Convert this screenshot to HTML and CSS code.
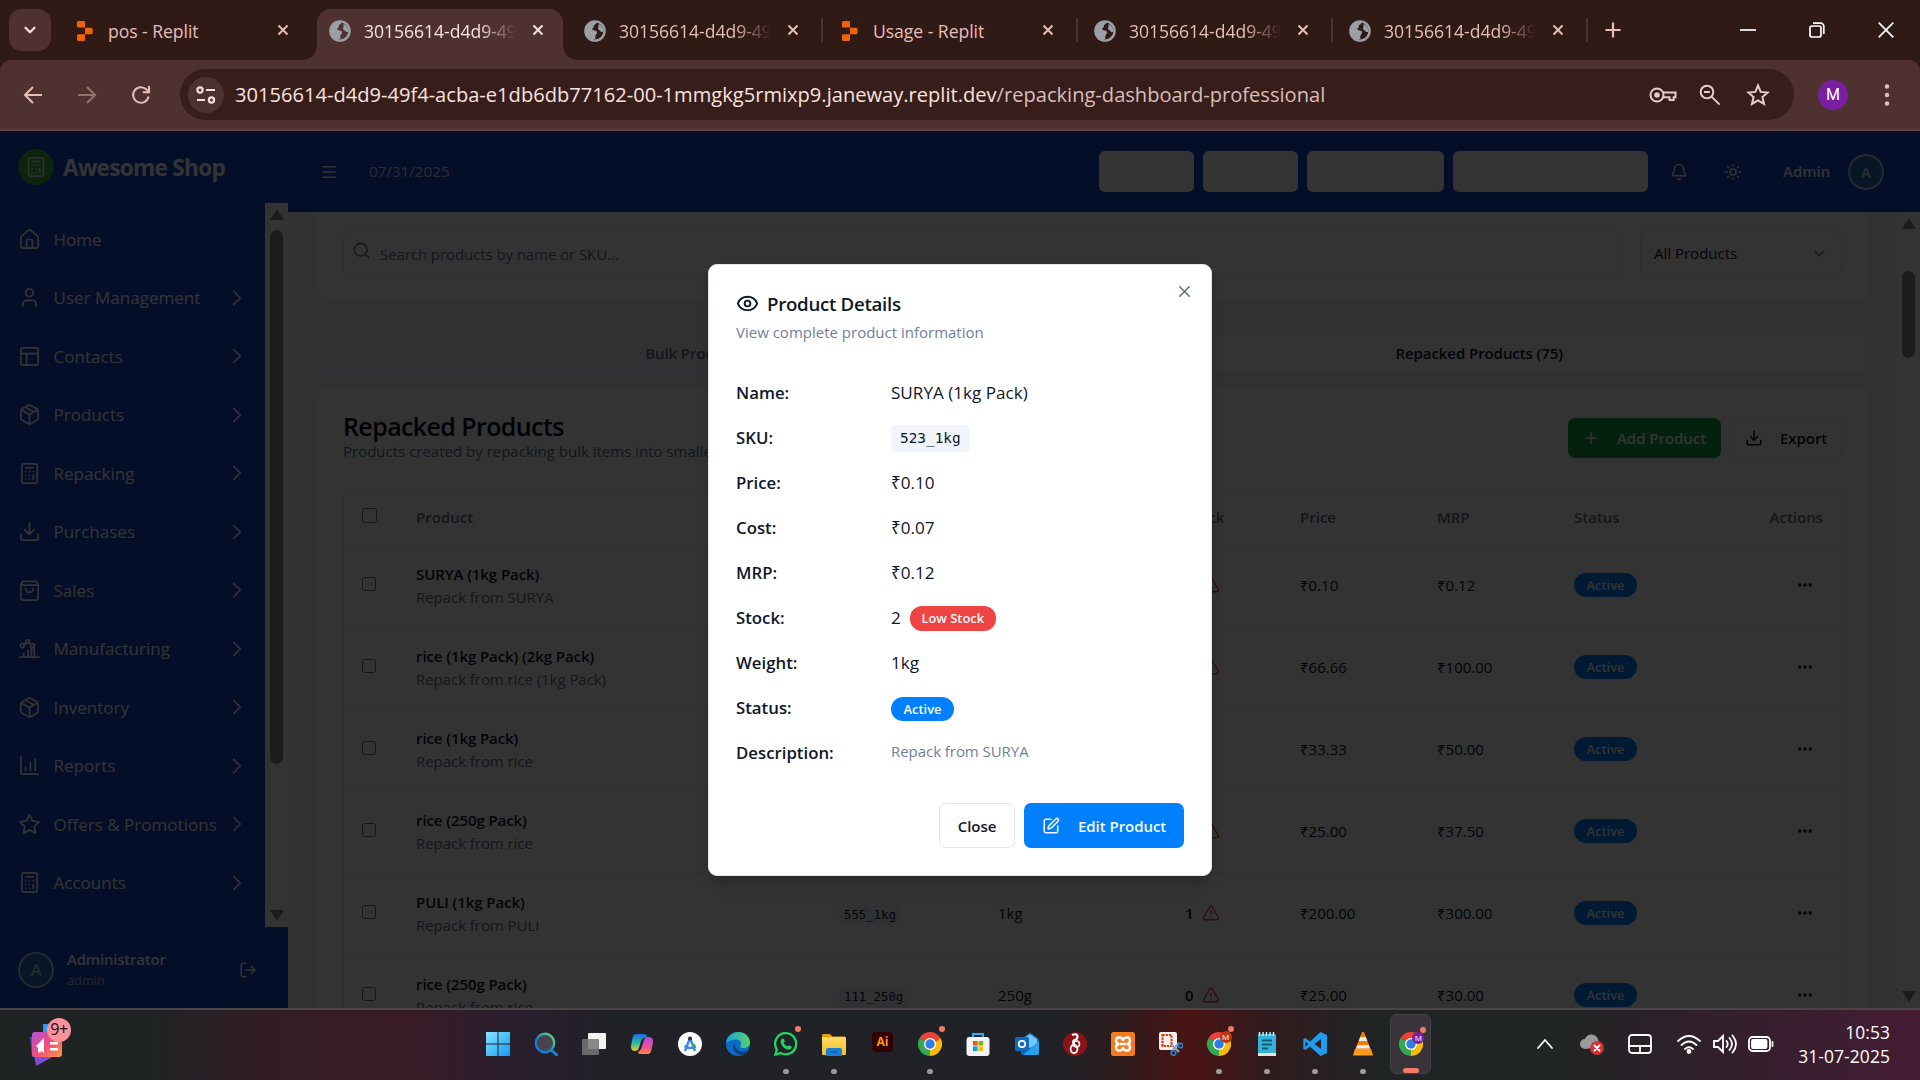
FILE: index.html
```html
<!DOCTYPE html>
<html lang="en">
<head>
<meta charset="utf-8">
<title>Repacking Dashboard</title>
<link rel="stylesheet" href="styles.css">
</head>
<body>
<svg class="defs" width="0" height="0">
  <defs>
    <linearGradient id="g-win" x1="0" y1="0" x2="1" y2="1"><stop offset="0" stop-color="#8be3ff"/><stop offset="1" stop-color="#0f9cf0"/></linearGradient>
    <linearGradient id="g-edge" x1="0" y1="0" x2="1" y2="0"><stop offset="0" stop-color="#1b9de2"/><stop offset="1" stop-color="#56d364"/></linearGradient>
    <linearGradient id="g-cop" x1="0" y1="0" x2="0" y2="1"><stop offset="0" stop-color="#1a6ae0"/><stop offset=".5" stop-color="#25b7a8"/><stop offset="1" stop-color="#e8c82c"/></linearGradient>
    <linearGradient id="g-cop2" x1="0" y1="0" x2="0" y2="1"><stop offset="0" stop-color="#a94ee6"/><stop offset=".6" stop-color="#f0508f"/><stop offset="1" stop-color="#ff8a4a"/></linearGradient>
    <linearGradient id="g-fold" x1="0" y1="0" x2="0" y2="1"><stop offset="0" stop-color="#ffdb63"/><stop offset="1" stop-color="#f9bf2c"/></linearGradient>
    <linearGradient id="g-find" x1="0" y1="1" x2="1" y2="0"><stop offset=".4" stop-color="#1480d8"/><stop offset="1" stop-color="#6ee66e"/></linearGradient>
    <linearGradient id="g-news" x1="0" y1="0" x2="1" y2="1"><stop offset="0" stop-color="#b553d8"/><stop offset=".5" stop-color="#f04a80"/><stop offset="1" stop-color="#ff9a3c"/></linearGradient>
  </defs>
  <symbol id="globe" viewBox="0 0 22 22"><circle cx="11" cy="11" r="9.6" fill="none" stroke="#9aa0a6" stroke-width="2.4"/><path fill="#9aa0a6" d="M2 9c1-5 5-7.500 10-7 1 1.500-.5 2.500-2 3-.5 1.500.5 2.500-1.500 3.200-1 1.300 1 2 2.500 2.300 2 .3 2.500 1.800 1.500 3.500-1.500 1.500-1.500 3-1 5C5 20 1 15 2 9zM14.500 4c3 1 5 4 5 7.500-1.500 1-3 .5-3.500-1-2-.5-2.500-2-1.500-3.500z"/></symbol>
  <symbol id="replit" viewBox="0 0 16 20"><path fill="#f26207" d="M0 1.500Q0 0 1.500 0H7Q8 0 8 1.200V6.600H1.500Q0 6.600 0 5.200zM8 6.700h6q1.600 0 1.600 1.500v3.700q0 1.400-1.600 1.400H8zM0 14.800q0-1.500 1.500-1.500H8v5.200Q8 20 6.800 20H1.500Q0 20 0 18.500z"/></symbol>
  <symbol id="x" viewBox="0 0 24 24"><path d="M18 6 6 18M6 6l12 12"/></symbol>
  <symbol id="home" viewBox="0 0 24 24"><path d="M15 21v-8a1 1 0 0 0-1-1h-4a1 1 0 0 0-1 1v8"/><path d="M3 10a2 2 0 0 1 .7-1.500l7-6a2 2 0 0 1 2.600 0l7 6A2 2 0 0 1 21 10v9a2 2 0 0 1-2 2H5a2 2 0 0 1-2-2z"/></symbol>
  <symbol id="user" viewBox="0 0 24 24"><circle cx="12" cy="7" r="4"/><path d="M19 21v-2a4 4 0 0 0-4-4H9a4 4 0 0 0-4 4v2"/></symbol>
  <symbol id="panels" viewBox="0 0 24 24"><rect x="3" y="3" width="18" height="18" rx="2"/><path d="M3 9h18M9 21V9"/></symbol>
  <symbol id="box" viewBox="0 0 24 24"><path d="m7.500 4.300 9 5.100M21 8a2 2 0 0 0-1-1.700l-7-4a2 2 0 0 0-2 0l-7 4A2 2 0 0 0 3 8v8a2 2 0 0 0 1 1.700l7 4a2 2 0 0 0 2 0l7-4a2 2 0 0 0 1-1.700ZM3.300 7l8.700 5 8.700-5M12 22V12"/></symbol>
  <symbol id="calc" viewBox="0 0 24 24"><rect x="4" y="2" width="16" height="20" rx="2"/><path d="M8 6h8M16 14v4M16 10h.01M12 10h.01M8 10h.01M12 14h.01M8 14h.01M12 18h.01M8 18h.01"/></symbol>
  <symbol id="download" viewBox="0 0 24 24"><path d="M21 15v4a2 2 0 0 1-2 2H5a2 2 0 0 1-2-2v-4M7 10l5 5 5-5M12 15V3"/></symbol>
  <symbol id="bag" viewBox="0 0 24 24"><path d="M5 2.500h14l2 3.500v14a2 2 0 0 1-2 2H5a2 2 0 0 1-2-2V6zM3 6.500h18M16 10a4 4 0 0 1-8 0"/></symbol>
  <symbol id="factory" viewBox="0 0 24 24"><path d="M2 21h20M6 21v-4M10.500 21v-7M14 21v-9l3-2v11M6 8l3-2"/><circle cx="4.500" cy="9" r="2"/><circle cx="10" cy="5" r="2"/><circle cx="15" cy="9" r="2"/></symbol>
  <symbol id="chart" viewBox="0 0 24 24"><path d="M3 3v16a2 2 0 0 0 2 2h16M18 17V5M13 17V9M8 17v-3"/></symbol>
  <symbol id="star" viewBox="0 0 24 24"><path d="m12 2 3.100 6.300 6.900 1-5 4.900 1.200 6.800-6.200-3.200L5.800 21 7 14.200 2 9.300l6.900-1z"/></symbol>
  <symbol id="right" viewBox="0 0 24 24"><path d="m9 18 6-6-6-6"/></symbol>
  <symbol id="down" viewBox="0 0 24 24"><path d="m6 9 6 6 6-6"/></symbol>
  <symbol id="logout" viewBox="0 0 24 24"><path d="M9 21H5a2 2 0 0 1-2-2V5a2 2 0 0 1 2-2h4M16 17l5-5-5-5M21 12H9"/></symbol>
  <symbol id="menu" viewBox="0 0 24 24"><path d="M4 5h16M4 12h16M4 19h16"/></symbol>
  <symbol id="bell" viewBox="0 0 24 24"><path d="M10.300 21a2 2 0 0 0 3.400 0M3.300 15.300A1 1 0 0 0 4 17h16a1 1 0 0 0 .7-1.700C19.400 14 18 12.500 18 8A6 6 0 0 0 6 8c0 4.500-1.400 6-2.700 7.300"/></symbol>
  <symbol id="sun" viewBox="0 0 24 24"><circle cx="12" cy="12" r="4"/><path d="M12 2v2M12 20v2M4.900 4.900l1.400 1.400M17.700 17.700l1.400 1.400M2 12h2M20 12h2M6.300 17.700l-1.400 1.400M19.100 4.900l-1.400 1.400"/></symbol>
  <symbol id="search" viewBox="0 0 24 24"><circle cx="11" cy="11" r="8"/><path d="m21 21-4.300-4.300"/></symbol>
  <symbol id="plus" viewBox="0 0 24 24"><path d="M5 12h14M12 5v14"/></symbol>
  <symbol id="warn" viewBox="0 0 24 24"><path d="m21.700 18-8-14a2 2 0 0 0-3.500 0l-8 14A2 2 0 0 0 4 21h16a2 2 0 0 0 1.700-3M12 9v4M12 17h.01"/></symbol>
  <symbol id="dots" viewBox="0 0 24 24"><circle cx="5" cy="12" r="1"/><circle cx="12" cy="12" r="1"/><circle cx="19" cy="12" r="1"/></symbol>
  <symbol id="eye" viewBox="0 0 24 24"><path d="M2.100 12.300a1 1 0 0 1 0-.7 10.700 10.700 0 0 1 19.800 0 1 1 0 0 1 0 .7 10.700 10.700 0 0 1-19.800 0"/><circle cx="12" cy="12" r="3"/></symbol>
  <symbol id="edit" viewBox="0 0 24 24"><path d="M12 3H5a2 2 0 0 0-2 2v14a2 2 0 0 0 2 2h14a2 2 0 0 0 2-2v-7"/><path d="M18.400 2.600a1 1 0 0 1 3 3l-9 9a2 2 0 0 1-.9.500l-2.900.8a.5.5 0 0 1-.6-.6l.8-2.900a2 2 0 0 1 .5-.8z"/></symbol>
  <symbol id="chrome" viewBox="0 0 24 24"><path fill="#ea4335" d="M12 12 1.600 6A12 12 0 0 1 22.400 6z"/><path fill="#34a853" d="M12 12v12A12 12 0 0 1 1.600 6z"/><path fill="#fbbc04" d="M12 12l10.400-6A12 12 0 0 1 12 24z"/><path fill="#ea4335" d="M12 6h10.400L18 10z"/><circle cx="12" cy="12" r="6" fill="#fff"/><circle cx="12" cy="12" r="4.700" fill="#2f7de9"/></symbol>
</svg>

<header class="browser">
  <div class="tabstrip">
    <div class="tabsearch"><svg class="ic" width="18" height="18"><use href="#down"/></svg></div>
    <div class="tab"><svg class="fav-r" width="16" height="20"><use href="#replit"/></svg><span class="tab-t">pos - Replit</span><svg class="ic tabx" width="18" height="18"><use href="#x"/></svg></div>
    <div class="tab active"><svg width="22" height="22"><use href="#globe"/></svg><span class="tab-t fade">30156614-d4d9-49f4</span><svg class="ic tabx" width="18" height="18"><use href="#x"/></svg></div>
    <div class="tab sep"><svg width="22" height="22"><use href="#globe"/></svg><span class="tab-t fade">30156614-d4d9-49f4</span><svg class="ic tabx" width="18" height="18"><use href="#x"/></svg></div>
    <div class="tab sep"><svg class="fav-r" width="16" height="20"><use href="#replit"/></svg><span class="tab-t">Usage - Replit</span><svg class="ic tabx" width="18" height="18"><use href="#x"/></svg></div>
    <div class="tab sep"><svg width="22" height="22"><use href="#globe"/></svg><span class="tab-t fade">30156614-d4d9-49f4</span><svg class="ic tabx" width="18" height="18"><use href="#x"/></svg></div>
    <div class="tab sep"><svg width="22" height="22"><use href="#globe"/></svg><span class="tab-t fade">30156614-d4d9-49f4</span><svg class="ic tabx" width="18" height="18"><use href="#x"/></svg></div>
    <svg class="ic newtab" width="26" height="26"><use href="#plus"/></svg>
    <div class="winbtns">
      <svg width="16" height="16" viewBox="0 0 16 16"><path d="M0 8h16"/></svg>
      <svg width="16" height="16" viewBox="0 0 16 16"><rect x="1" y="4" width="11" height="11" rx="2"/><path d="M4 1.200h7.500a3.300 3.300 0 0 1 3.300 3.300V12"/></svg>
      <svg width="16" height="16" viewBox="0 0 16 16"><path d="m.7.7 14.600 14.600M15.300.7.700 15.300"/></svg>
    </div>
  </div>
  <div class="toolbar">
    <svg class="nav-ic" viewBox="0 0 20 20"><path d="M19 10H2M10 2l-8 8 8 8"/></svg>
    <svg class="nav-ic off" viewBox="0 0 20 20"><path d="M1 10h17M10 2l8 8-8 8"/></svg>
    <svg class="nav-ic" viewBox="0 0 20 20"><path d="M17.600 11.500a7.800 7.800 0 1 1-2.200-7.100L18 7M18 1v6.300h-6.200"/></svg>
    <div class="omnibox">
      <div class="siteinfo"><svg width="20" height="20" viewBox="0 0 20 20"><circle cx="4" cy="5" r="2.600"/><path d="M10 5h9M1 15h8"/><circle cx="15.500" cy="15" r="2.600"/></svg></div>
      <div class="url">30156614-d4d9-49f4-acba-e1db6db77162-00-1mmgkg5rmixp9.janeway.replit.dev<span>/repacking-dashboard-professional</span></div>
      <svg class="omi" width="28" height="20" viewBox="0 0 28 20"><circle cx="8" cy="10" r="6.500"/><circle cx="8" cy="10" r="1.800" fill="#e6cdc9"/><path d="M14 7.500h12.500v4.700h-1.800V15h-4.200v-2.800H14"/></svg>
      <svg class="omi lens" width="22" height="22" viewBox="0 0 22 22"><circle cx="8" cy="8" r="6.300"/><path d="m12.600 12.600 8 8M5 8h6"/></svg>
      <svg class="omi fav" width="24" height="24" viewBox="0 0 24 24"><path d="m12 2.500 2.700 6.400 7 .6-5.300 4.600 1.600 6.800-6-3.600-6 3.600 1.600-6.800L2.300 9.500l7-.6z"/></svg>
    </div>
    <div class="profile">M</div>
    <svg class="kebab" width="6" height="24" viewBox="0 0 6 24"><circle cx="3" cy="3.500" r="2.200"/><circle cx="3" cy="12" r="2.200"/><circle cx="3" cy="20.500" r="2.200"/></svg>
  </div>
</header>

<div class="app">
  <aside class="sidebar">
    <div class="brand"><span class="brand-ic"><svg class="ic" width="22" height="22"><use href="#calc"/></svg></span><span class="brand-t">Awesome Shop</span></div>
    <div class="navwrap">
      <nav class="nav">
        <a><svg class="ic"><use href="#home"/></svg><span>Home</span></a>
        <a><svg class="ic"><use href="#user"/></svg><span>User Management</span><svg class="ic chev"><use href="#right"/></svg></a>
        <a><svg class="ic"><use href="#panels"/></svg><span>Contacts</span><svg class="ic chev"><use href="#right"/></svg></a>
        <a><svg class="ic"><use href="#box"/></svg><span>Products</span><svg class="ic chev"><use href="#right"/></svg></a>
        <a><svg class="ic"><use href="#calc"/></svg><span>Repacking</span><svg class="ic chev"><use href="#right"/></svg></a>
        <a><svg class="ic"><use href="#download"/></svg><span>Purchases</span><svg class="ic chev"><use href="#right"/></svg></a>
        <a><svg class="ic"><use href="#bag"/></svg><span>Sales</span><svg class="ic chev"><use href="#right"/></svg></a>
        <a><svg class="ic"><use href="#factory"/></svg><span>Manufacturing</span><svg class="ic chev"><use href="#right"/></svg></a>
        <a><svg class="ic"><use href="#box"/></svg><span>Inventory</span><svg class="ic chev"><use href="#right"/></svg></a>
        <a><svg class="ic"><use href="#chart"/></svg><span>Reports</span><svg class="ic chev"><use href="#right"/></svg></a>
        <a><svg class="ic"><use href="#star"/></svg><span>Offers &amp; Promotions</span><svg class="ic chev"><use href="#right"/></svg></a>
        <a><svg class="ic"><use href="#calc"/></svg><span>Accounts</span><svg class="ic chev"><use href="#right"/></svg></a>
      </nav>
      <div class="sbar"><i class="up"></i><b class="side-thumb"></b><i class="dn"></i></div>
    </div>
    <div class="account">
      <span class="avatar">A</span>
      <div class="who"><strong>Administrator</strong><small>admin</small></div>
      <svg class="ic" width="18" height="18"><use href="#logout"/></svg>
    </div>
  </aside>

  <div class="main">
    <div class="topbar">
      <svg class="ic" width="20" height="18"><use href="#menu"/></svg>
      <span class="date">07/31/2025</span>
      <div class="quick"><i class="q1"></i><i class="q1"></i><i class="q2"></i><i class="q3"></i></div>
      <svg class="ic bell" width="18" height="18"><use href="#bell"/></svg>
      <svg class="ic sun" width="18" height="18"><use href="#sun"/></svg>
      <strong class="adm">Admin</strong>
      <span class="avatar">A</span>
    </div>
    <div class="scroll">
      <div class="content">
        <section class="card filters">
          <div class="field find"><svg class="ic" width="19" height="19"><use href="#search"/></svg><span>Search products by name or SKU...</span></div>
          <div class="field pick"><span>All Products</span><svg class="ic" width="17" height="17"><use href="#down"/></svg></div>
        </section>
        <div class="segs"><span>Bulk Products (7)</span><span class="on">Repacked Products (75)</span></div>
        <section class="card list">
          <div class="listhead">
            <div><h2>Repacked Products</h2><p>Products created by repacking bulk items into smaller quantities</p></div>
            <div class="acts">
              <span class="btn add"><svg class="ic" width="18" height="18"><use href="#plus"/></svg>Add Product</span>
              <span class="btn exp"><svg class="ic" width="18" height="18"><use href="#download"/></svg>Export</span>
            </div>
          </div>
          <div class="table">
            <div class="row th"><i class="cb"></i><span>Product</span><span>SKU</span><span>Weight</span><span>Stock</span><span>Price</span><span>MRP</span><span>Status</span><span class="r">Actions</span></div>
            <div class="row"><i class="cb"></i><div class="prod"><b>SURYA (1kg Pack)</b><small>Repack from SURYA</small></div><span><code>523_1kg</code></span><span>1kg</span><span class="stk">2<svg class="ic"><use href="#warn"/></svg></span><span>₹0.10</span><span>₹0.12</span><span><em class="badge">Active</em></span><svg class="ic more"><use href="#dots"/></svg></div>
            <div class="row"><i class="cb"></i><div class="prod"><b>rice (1kg Pack) (2kg Pack)</b><small>Repack from rice (1kg Pack)</small></div><span><code>111_2kg</code></span><span>2kg</span><span class="stk">0<svg class="ic"><use href="#warn"/></svg></span><span>₹66.66</span><span>₹100.00</span><span><em class="badge">Active</em></span><svg class="ic more"><use href="#dots"/></svg></div>
            <div class="row"><i class="cb"></i><div class="prod"><b>rice (1kg Pack)</b><small>Repack from rice</small></div><span><code>111_1kg</code></span><span>1kg</span><span class="stk">8</span><span>₹33.33</span><span>₹50.00</span><span><em class="badge">Active</em></span><svg class="ic more"><use href="#dots"/></svg></div>
            <div class="row"><i class="cb"></i><div class="prod"><b>rice (250g Pack)</b><small>Repack from rice</small></div><span><code>111_250g</code></span><span>250g</span><span class="stk">0<svg class="ic"><use href="#warn"/></svg></span><span>₹25.00</span><span>₹37.50</span><span><em class="badge">Active</em></span><svg class="ic more"><use href="#dots"/></svg></div>
            <div class="row"><i class="cb"></i><div class="prod"><b>PULI (1kg Pack)</b><small>Repack from PULI</small></div><span><code>555_1kg</code></span><span>1kg</span><span class="stk">1<svg class="ic"><use href="#warn"/></svg></span><span>₹200.00</span><span>₹300.00</span><span><em class="badge">Active</em></span><svg class="ic more"><use href="#dots"/></svg></div>
            <div class="row"><i class="cb"></i><div class="prod"><b>rice (250g Pack)</b><small>Repack from rice</small></div><span><code>111_250g</code></span><span>250g</span><span class="stk">0<svg class="ic"><use href="#warn"/></svg></span><span>₹25.00</span><span>₹30.00</span><span><em class="badge">Active</em></span><svg class="ic more"><use href="#dots"/></svg></div>
          </div>
        </section>
      </div>
      <div class="sbar page"><i class="up"></i><b class="page-thumb"></b><i class="dn"></i></div>
    </div>
  </div>

  <div class="overlay">
    <div class="modal">
      <svg class="ic mclose" width="19" height="19"><use href="#x"/></svg>
      <h3><svg class="ic" width="23" height="23"><use href="#eye"/></svg>Product Details</h3>
      <p class="sub">View complete product information</p>
      <dl>
        <dt>Name:</dt><dd>SURYA (1kg Pack)</dd>
        <dt>SKU:</dt><dd><code>523_1kg</code></dd>
        <dt>Price:</dt><dd>₹0.10</dd>
        <dt>Cost:</dt><dd>₹0.07</dd>
        <dt>MRP:</dt><dd>₹0.12</dd>
        <dt>Stock:</dt><dd>2<em class="badge low">Low Stock</em></dd>
        <dt>Weight:</dt><dd>1kg</dd>
        <dt>Status:</dt><dd><em class="badge">Active</em></dd>
        <dt>Description:</dt><dd class="desc">Repack from SURYA</dd>
      </dl>
      <div class="mfoot"><span class="btn close">Close</span><span class="btn edit"><svg class="ic" width="18" height="18"><use href="#edit"/></svg>Edit Product</span></div>
    </div>
  </div>
</div>

<footer class="taskbar">
  <div class="widget">
    <svg width="36" height="44" viewBox="0 0 36 44"><path fill="#2d9cf0" d="M13 2h16v20H13z"/><path fill="#2f5fb0" d="M0 15h10v20H2z"/><path fill="#7c4bd8" d="M4 33h22L6 44z"/><rect x="2" y="10" width="30" height="25" rx="3" fill="url(#g-news)"/><path fill="#fff" d="m6 24 8-8v15l-3-2-1 2-2-1v-4zM20 20h8v2.500h-8zM20 26h8v2.500h-8z"/></svg>
    <span>9+</span>
  </div>
  <div class="apps">
    <div class="app-i"><svg viewBox="0 0 24 24" fill="url(#g-win)"><path d="M0 0h11.500v11.500H0zM12.500 0H24v11.500H12.500zM0 12.500h11.500V24H0zM12.500 12.500H24V24H12.500z"/></svg></div>
    <div class="app-i"><svg viewBox="0 0 24 24"><path d="m17 18 6 5" stroke="#1480d8" stroke-width="3" stroke-linecap="round"/><circle cx="11" cy="11" r="9.200" fill="#454550" stroke="url(#g-find)" stroke-width="2.400"/></svg></div>
    <div class="app-i"><svg viewBox="0 0 24 24"><rect x="6" y="1" width="18" height="16" rx="1" fill="#f2f2f2"/><rect x="0" y="7" width="17" height="16" rx="1" fill="#777" opacity=".85"/></svg></div>
    <div class="app-i"><svg viewBox="0 0 24 24"><path fill="url(#g-cop)" d="M6 2h8q3 0 3 3l-3 1q-2 0-3 3l-2 7q-1 3-4 3-4.500 0-4-5L2.500 6Q3.500 2 6 2z"/><path fill="url(#g-cop2)" d="M18 22h-8q-2 0-2-2 2-1 3-3l3-9q1-3 4-3 5.500 0 5 5L21.500 18q-1 4-3.500 4z"/></svg></div>
    <div class="app-i"><svg viewBox="0 0 24 24"><circle cx="12" cy="12" r="12" fill="#fff"/><path d="m12 6-5 13M12 6l5 13M6.500 14q5.500 4 11 0" fill="none" stroke="#4285f4" stroke-width="2.400"/><circle cx="12" cy="6.500" r="2" fill="#333"/><path d="m15.500 12 2 4" stroke="#34a853" stroke-width="2"/></svg></div>
    <div class="app-i"><svg viewBox="0 0 24 24"><circle cx="12" cy="12" r="12" fill="#0c6cc4"/><path fill="url(#g-edge)" d="M0 11C1 4 6 0 12 0c7 0 12 5 12 10 0 4-3 6-6.500 6-3 0-4-1.200-3-2.500 2-3-1-6-5-6-4.500 0-7.500 2-9.500 3.500z"/><path fill="#103f86" d="M9 11c-4 5 0 12 7 12 3-.5 5-2.500 6-4.500-6 3-14 0-13-7.500z"/></svg></div>
    <div class="app-i run note"><svg viewBox="0 0 24 24"><path fill="#202427" stroke="#25d366" stroke-width="2.300" d="M12 1.200a10.600 10.600 0 1 1-5.500 19.900L1.400 22.500l1.400-5A10.600 10.600 0 0 1 12 1.200z"/><path fill="#25d366" d="M8 6.500 10 7l.8 2.500L9.500 11q1.500 2.500 4 3.500l1.500-1.300 2.700 1.200q0 3-3 3.100Q9 17 6.700 11 6 8 8 6.500z"/></svg></div>
    <div class="app-i run"><svg viewBox="0 0 24 24"><path fill="#e29a10" d="M0 3q0-1 1-1h7l2.500 2.500H23v5H0z"/><rect y="5" width="24" height="18" rx="1.200" fill="url(#g-fold)"/><path fill="#1580d4" d="M4 24v-6q0-2 2-2h12q2 0 2 2v6z"/><path d="M8.500 20h7" stroke="#0d5ba0" stroke-width="1.500"/></svg></div>
    <div class="app-i"><span class="ai">Ai</span></div>
    <div class="app-i run note"><svg><use href="#chrome"/></svg></div>
    <div class="app-i"><svg viewBox="0 0 24 24"><path d="M7 6V2h10v4" fill="none" stroke="#26b4f0" stroke-width="2"/><rect x=".5" y="5" width="23" height="19" rx="3" fill="#f4f4f4"/><path fill="#f25022" d="M7 9h4.600v4.600H7z"/><path fill="#7fba00" d="M12.400 9H17v4.600h-4.600z"/><path fill="#00a4ef" d="M7 14.400h4.600V19H7z"/><path fill="#ffb900" d="M12.400 14.400H17V19h-4.600z"/></svg></div>
    <div class="app-i"><svg viewBox="0 0 24 24"><path fill="#1265b8" d="M6 7 15 .5 24 7v14q0 2-2 2H8q-2 0-2-2z"/><path fill="#6fc8f7" d="M10 5.500 15 2l7 5v5l-7 4-5-3z"/><path fill="#28a2ea" d="m24 9-16 14h14q2 0 2-2z"/><rect y="5" width="14" height="14" rx="1.500" fill="#0f6cbd"/><circle cx="7" cy="12" r="3.200" fill="none" stroke="#fff" stroke-width="1.700"/></svg></div>
    <div class="app-i"><svg viewBox="0 0 24 24"><circle cx="12" cy="12" r="12" fill="#8c1319"/><path d="M9 3q5-2 5.500 1.500 0 3-3 3.500-3 2 0 4" fill="none" stroke="#fff" stroke-width="2.200"/><ellipse cx="11" cy="17" rx="3.400" ry="4" fill="none" stroke="#fff" stroke-width="1.800"/><ellipse cx="13.500" cy="12" rx="3" ry="3" fill="none" stroke="#fff" stroke-width="1.600"/></svg></div>
    <div class="app-i"><svg viewBox="0 0 24 24"><rect width="24" height="24" rx="2.500" fill="#f47b20"/><path d="M8 5.500q-3 0-3 3.200T8.500 12Q5 12 5 15.300t3 3.200q4 0 4-3.500 0 3.500 4 3.500 3 0 3-3.200T15.500 12Q19 12 19 8.700t-3-3.200q-4 0-4 3.500 0-3.500-4-3.500zM9 12h6" fill="none" stroke="#fff" stroke-width="2.400"/></svg></div>
    <div class="app-i"><svg viewBox="0 0 24 24"><rect width="18" height="18" rx="2" fill="#f1f1f1"/><rect x="3.500" y="3" width="9" height="11" fill="none" stroke="#d83b01" stroke-width="2.200" stroke-dasharray="2.200 1"/><path d="m12 12 8 8M20 11l-7 8" stroke="#8fa6b8" stroke-width="2"/><circle cx="14.500" cy="21" r="2.300" fill="none" stroke="#1c88d8" stroke-width="1.600"/><circle cx="21.500" cy="13.500" r="2.300" fill="none" stroke="#1c88d8" stroke-width="1.600"/></svg></div>
    <div class="app-i run note"><svg><use href="#chrome"/></svg><span class="mini">M</span></div>
    <div class="app-i run"><svg viewBox="0 0 24 24"><rect x="3" y="2" width="18" height="21" rx="1.500" fill="#35b2d8"/><rect x="3" y="21" width="18" height="3" fill="#ece5dc"/><path d="M4.500 0v4M8 0v4M11.500 0v4M15 0v4M18.500 0v4" stroke="#d8f0f8" stroke-width="1.400"/><path d="M7 8.500h10M7 12.500h10M7 16.500h6" stroke="#125a78" stroke-width="1.800"/></svg></div>
    <div class="app-i run"><svg viewBox="0 0 24 24"><path d="M17.500 0 24 3v18l-6.500 3L7 14.500 2.300 18 .3 16.800v-9.600L2.300 6 7 9.500zM18 7l-6.500 5 6.500 5zM2.500 9.300v5.400L5.200 12z" fill="#1f9cf0" fill-rule="evenodd"/></svg></div>
    <div class="app-i run"><svg viewBox="0 0 24 24"><path fill="#f57c00" d="M11 0h2l7 18H4z"/><path fill="#eee" d="m9.300 5-1.500 4h8.400l-1.500-4zM6.300 13l-1.200 3.500h13.800L17.700 13z"/><path fill="#ff9a1a" d="M4 17h16l2 6.500H2z"/></svg></div>
    <div class="app-i run note current"><svg><use href="#chrome"/></svg><span class="mini purple">M</span></div>
  </div>
  <div class="tray">
    <svg width="18" height="18" viewBox="0 0 18 18"><path d="m2 13 7-8 7 8"/></svg>
    <svg width="26" height="24" viewBox="0 0 26 24"><path d="M6 17a5 5 0 0 1 0-10 7 7 0 0 1 12-2l4 10z" fill="#9a9a9a" stroke="none"/><circle cx="18" cy="16" r="7" fill="#d13438" stroke="none"/><path d="m15.500 13.500 5 5m0-5-5 5"/></svg>
    <svg width="24" height="20" viewBox="0 0 24 20"><rect x="1" y="1" width="22" height="18" rx="3"/><path d="M1 12h22M12 12v7"/></svg>
    <svg width="26" height="20" viewBox="0 0 26 20"><path d="M2 7q11-10 22 0M5.500 11q7.500-7 15 0M9 15q4-3.500 8 0"/><circle cx="13" cy="17.500" r="1.500" fill="#fff"/></svg>
    <svg width="26" height="20" viewBox="0 0 26 20"><path d="M2 7h4l5-5v16l-5-5H2zM14.500 7q2.500 3 0 6M17.500 4q5 6 0 12M20.500 1.500q7 8.500 0 17"/></svg>
    <svg width="26" height="18" viewBox="0 0 26 18"><rect x="1" y="2" width="21" height="14" rx="3.500"/><rect x="4" y="5" width="14.500" height="8" rx="1" fill="#fff"/><path d="M24.500 7v4"/></svg>
  </div>
  <div class="clock"><span>10:53</span><span>31-07-2025</span></div>
</footer>
</body>
</html>
```
FILE: styles.css
```css
* { box-sizing: border-box; }
body {
  margin: 0;
  width: 1920px;
  height: 1080px;
  overflow: hidden;
  display: flex;
  flex-direction: column;
  font-family: "Open Sans", "Noto Sans", sans-serif;
  font-size: 15px;
  color: #0f172a;
}
.defs { position: absolute; }
svg { flex: none; }
.ic { fill: none; stroke: currentColor; stroke-width: 2; stroke-linecap: round; stroke-linejoin: round; }
em, i { font-style: normal; }

/* browser chrome */
.browser { height: 131px; flex: none; background: #301a16; color: #e8beb8; }
.tabstrip { height: 60px; display: flex; align-items: center; padding-left: 9px; }
.tabsearch { width: 42px; height: 42px; margin-right: 6px; border-radius: 13px; background: #4f3230; display: grid; place-items: center; color: #f6dedb; }
.tabsearch .ic { stroke-width: 3; }
.tab { width: 255px; height: 60px; display: flex; align-items: center; padding: 2px 20px 0 17px; position: relative; }
.tab > svg:first-child { margin-right: 13px; }
.tab > .fav-r:first-child { margin: 0 15px 0 3px; }
.tab-t { width: 153px; height: 26px; line-height: 27px; white-space: nowrap; overflow: hidden; margin-right: 13px; font-size: 17.600px; letter-spacing: -.05px; }
.fade { width: 152px; -webkit-mask-image: linear-gradient(90deg, #000 115px, transparent 152px); mask-image: linear-gradient(90deg, #000 115px, transparent 152px); }
.tabx { stroke-width: 2.600; stroke-linecap: butt; margin-bottom: 2px; }
.active { color: #f8e2de; z-index: 1; }
.active > * { position: relative; }
.active::before { content: ""; position: absolute; left: 5px; right: 4px; top: 9px; bottom: 0; border-radius: 14px 14px 0 0; background: #4f3230; }
.active::after { content: ""; position: absolute; left: -9px; right: -10px; bottom: 0; height: 14px;
  background: radial-gradient(circle at 0 0, transparent 13.500px, #4f3230 14px) left / 14px 14px no-repeat, radial-gradient(circle at 100% 0, transparent 13.500px, #4f3230 14px) right / 14px 14px no-repeat; }
.sep::after { content: ""; position: absolute; right: -1px; top: 18px; width: 2px; height: 24px; background: #4f3230; }
.newtab { margin-left: 13px; stroke-width: 2; stroke-linecap: butt; }
.winbtns { margin-left: auto; margin-right: 26px; display: flex; gap: 53px; }
.winbtns svg { fill: none; stroke: #fff; stroke-width: 1.700; }
.toolbar { height: 71px; background: #4f3230; border-radius: 11px 11px 0 0; border-bottom: 2px solid #5a4340; display: flex; align-items: center; padding: 0 30px 0 23px; }
.nav-ic { width: 20px; height: 20px; margin-right: 34px; fill: none; stroke: #e8beb8; stroke-width: 2; }
.nav-ic.off { opacity: .45; }
.nav-ic:nth-child(3) { margin-right: 29px; }
.omnibox { width: 1614px; height: 51px; border-radius: 26px; background: #381e1b; display: flex; align-items: center; padding: 0 24px 0 8px; }
.siteinfo { width: 36px; height: 36px; border-radius: 50%; background: #4f3230; display: grid; place-items: center; margin-right: 11px; }
.siteinfo svg, .omi { fill: none; stroke: #f6dedb; stroke-width: 2.200; }
.url { flex: 1; font-size: 20.100px; color: #f8e2de; white-space: nowrap; line-height: 30px; }
.url span { color: #d9bdb9; }
.omi { stroke: #e6cdc9; stroke-width: 2; margin-left: 23px; }
.lens { margin-left: 22px; }
.fav { margin-left: 25px; }
.profile { width: 30px; height: 30px; border-radius: 50%; margin: 0 36px 0 24px; background: #7b1fa2; color: #fff; font: 16px/30px Roboto, sans-serif; text-align: center; }
.kebab { fill: #e8beb8; }

/* application shell */
.app { position: relative; height: 877px; flex: none; display: flex; background: #fff; overflow: hidden; }
.sidebar { width: 288px; display: flex; flex-direction: column; background: #1a47cc; color: #fff; }
.brand { height: 72px; display: flex; align-items: center; padding-left: 18px; gap: 9px; }
.brand-ic { width: 36px; height: 36px; border-radius: 50%; display: grid; place-items: center; background: #3cb043; color: #dce9dd; }
.brand-t { font-weight: 700; font-size: 22.600px; letter-spacing: -.7px; }
.navwrap { display: flex; height: 724px; }
.nav { width: 265px; padding-top: 7px; }
.nav a { height: 58.500px; display: flex; align-items: center; padding: 0 19px 0 18px; font-size: 17.050px; }
.nav .ic { width: 23px; height: 23px; margin-right: 12.500px; stroke-width: 1.800; }
.nav .chev { width: 26px; height: 26px; margin: 0 -4px 0 auto; stroke-width: 1.600; }
.sbar { width: 23px; background: #fcfcfc; display: flex; flex-direction: column; align-items: center; }
.sbar i { border: 7px solid transparent; flex: none; }
.sbar .up { border-top: 0; border-bottom: 11px solid #8b8b8b; margin: 6px 0 10px; }
.sbar .dn { border-bottom: 0; border-top: 11px solid #8b8b8b; margin: auto 0 6px; }
.sbar b { width: 13px; border-radius: 7px; background: #8b8b8b; }
.sbar .side-thumb { height: 534px; }
.sbar .page-thumb { height: 87px; margin-top: 32px; }
.account { flex: 1; display: flex; align-items: center; padding: 3px 31px 0 18px; border-top: 1px solid #2450d2; }
.avatar { width: 36px; height: 36px; border: 2px solid #bfc9dd; border-radius: 50%; background: #2c74c8; color: #dfe6f2; text-align: center; line-height: 31px; font-size: 17px; }
.who { flex: 1; padding: 0 0 1px 13px; display: flex; flex-direction: column; }
.who strong { font-size: 15px; line-height: 22px; font-weight: 600; letter-spacing: -.2px; }
.who small { font-size: 12.800px; line-height: 20px; color: #b8c4e0; }

.main { flex: 1; display: flex; flex-direction: column; }
.topbar { height: 81px; display: flex; align-items: center; padding: 0 36px 0 31px; background: #1a47cc; color: #fff; }
.date { margin: -2px 0 0 30px; font-size: 15.200px; color: #d5dcec; }
.quick { margin-left: auto; display: flex; gap: 9px; }
.quick i { height: 41px; border-radius: 6px; background: #fff; }
.q1 { width: 95px; } .q2 { width: 137px; } .q3 { width: 195px; }
.bell { margin-left: 22px; } .sun { margin-left: 36px; }
.adm { width: 49px; margin: -2px 16px 0 41px; font-weight: 600; font-size: 15px; }
.topbar .avatar { font-weight: 600; font-size: 15px; line-height: 32px; }
.scroll { flex: 1; min-height: 0; display: flex; background: #fafafa; }
.content { width: 1609px; height: 796px; overflow: hidden; padding: 0 27px; }
.card { border: 1px solid #e2e8f0; border-radius: 9px; background: #fdfdfd; }
.filters { height: 92px; margin-top: -1px; border-top: 0; border-radius: 0 0 9px 9px; display: flex; gap: 18px; padding: 20px 27px 0; }
.field { height: 45px; border: 1px solid #e2e8f0; border-radius: 7px; display: flex; align-items: center; }
.find { flex: 1; padding-left: 8px; color: #64748b; }
.find .ic { margin: -6px 9px 0 0; }
.find span { letter-spacing: -.08px; }
.pick { width: 202px; padding: 0 13px; justify-content: space-between; }
.pick span { margin-top: -2px; }
.pick .ic { color: #64748b; }
.segs { margin-top: 28px; height: 45px; padding: 4px; border-radius: 7px; background: #f1f5f9; display: grid; grid-template-columns: 1fr 1fr; text-align: center; line-height: 36px; font-weight: 600; color: #64748b; letter-spacing: -.08px; }
.segs .on { background: #fdfdfd; border-radius: 5px; color: #0f172a; }
.list { height: 700px; margin-top: 9px; padding: 0 27px; border-radius: 9px; }
.listhead { height: 104px; display: flex; justify-content: space-between; }
h2 { margin: 24px 0 0; font-size: 25px; line-height: 32px; font-weight: 600; letter-spacing: -.6px; color: #020817; }
p { margin: 0; color: #64748b; }
.listhead p { line-height: 18px; white-space: nowrap; }
.acts { display: flex; gap: 9px; padding-top: 32px; }
.btn { display: flex; align-items: center; border-radius: 7px; font-weight: 600; white-space: nowrap; letter-spacing: -.05px; }
.acts .btn { height: 40px; padding: 0 14px; }
.acts .ic { margin-right: 17px; }
.add { width: 153px; background: #16a34a; color: #fff; }
.exp { width: 112px; border: 1px solid #e2e8f0; }
.table { border: 1px solid #e2e8f0; border-radius: 7px; height: 620px; }
.row { height: 82px; display: grid; grid-template-columns: 54px 422px 160px 187px 115px 137px 137px 100px 149px; align-items: center; padding: 0 17px 2px 18px; border-bottom: 1px solid #e2e8f0; }
.th { height: 54px; font-weight: 600; color: #64748b; }
.r { text-align: right; }
.cb { width: 14px; height: 14px; border: 1.500px solid #767676; border-radius: 2.500px; margin-bottom: 1px; }
.th .cb { width: 15px; height: 15px; margin-bottom: 2px; }
.prod b, .prod small { display: block; font-size: 15px; }
.prod b { font-weight: 600; line-height: 24px; letter-spacing: -.08px; }
.prod small { color: #64748b; line-height: 22px; letter-spacing: -.05px; }
code { font-family: "DejaVu Sans Mono", monospace; font-size: 12.300px; background: #f1f5f9; border-radius: 4px; padding: 3px 5px; }
.row code { margin-left: 1px; }
.stk { display: flex; align-items: center; gap: 8px; font-weight: 600; }
.stk .ic { width: 18px; height: 18px; color: #ef4444; }
.badge { display: inline-block; width: 63px; height: 24px; border-radius: 12px; background: #0080ff; color: #f8fafc; text-align: center; font-size: 12.900px; line-height: 25px; font-weight: 600; vertical-align: middle; }
.more { width: 18px; height: 18px; justify-self: end; margin-right: 9px; stroke-width: 2.500; }

/* dialog */
.overlay { position: absolute; inset: 0; background: rgba(0,0,0,.8); display: flex; align-items: center; justify-content: center; }
.modal { position: relative; width: 504px; height: 612px; margin-top: 1px; padding: 26px 27px; border: 1px solid #e2e8f0; border-radius: 9px; background: #fff; box-shadow: 0 10px 16px -3px rgba(0,0,0,.2); }
.mclose { position: absolute; right: 17px; top: 17px; color: #5b6475; stroke-width: 1.700; }
h3 { margin: 0; display: flex; align-items: center; gap: 8px; height: 24px; font-size: 18.700px; font-weight: 600; letter-spacing: -.3px; }
.sub { margin-top: 4px; line-height: 26px; color: #71809a; }
dl { margin: 25px 0 0; display: grid; grid-template-columns: 155px 1fr; grid-auto-rows: 45px; align-items: center; font-size: 17.100px; }
dt { font-weight: 600; font-size: 16.800px; }
dd { margin: 0; display: flex; align-items: center; }
dd code { font-size: 14.400px; padding: 0 9px; line-height: 27px; border-radius: 5px; margin-top: 2px; }
dd .badge { margin-top: 2px; }
.low { width: 86px; height: 25px; margin-left: 9px; background: #ef4444; }
.desc { font-size: 15px; color: #71809a; padding-bottom: 4px; letter-spacing: -.05px; }
.mfoot { margin-top: 28px; display: flex; justify-content: flex-end; gap: 9px; }
.mfoot .btn { height: 45px; }
.close { width: 76px; justify-content: center; border: 1px solid #e2e8f0; }
.edit { width: 160px; padding-left: 18px; gap: 18px; background: #0080ff; color: #f8fafc; }

/* taskbar */
.taskbar { height: 72px; flex: none; display: flex; align-items: center; padding-bottom: 2px; border-top: 2px solid #4a4446; color: #fff;
  background: linear-gradient(90deg, #202324 0, #202324 150px, #331d24 270px, #391b26 410px, #2a1e2f 510px, #202227 620px, #202227 1060px, #2e1b1e 1120px, #4a1414 1190px, #321b1e 1260px, #202425 1380px, #202425 1560px, #30202a 1700px, #451c35 1920px); }
.widget { position: relative; width: 60px; margin-left: 30px; height: 50px; }
.widget svg { margin-top: 3px; }
.widget span { position: absolute; left: 17px; top: -1px; width: 24px; height: 24px; border-radius: 50%; background: #fb929b; color: #111; font-size: 16px; line-height: 23px; text-align: center; letter-spacing: -.5px; }
.apps { margin-left: 384px; display: flex; }
.app-i { position: relative; width: 48.050px; height: 60px; display: grid; place-items: center; }
.app-i svg { width: 24px; height: 24px; }
.run::after { content: ""; position: absolute; left: 21px; bottom: 0; width: 6px; height: 5px; border-radius: 3px; background: #9b9b9b; }
.note::before { content: ""; position: absolute; left: 33px; top: 12px; width: 6px; height: 6px; border-radius: 50%; background: #f27a66; z-index: 1; }
.ai { width: 21px; height: 20px; border-radius: 4px; background: #330000; color: #ff9a00; font-size: 12px; line-height: 19px; font-weight: 700; text-align: center; margin-top: -4px; }
.mini { position: absolute; left: 25px; top: 17px; width: 12px; height: 12px; border-radius: 50%; background: #bf360c; color: #fff; font-size: 8px; line-height: 12px; text-align: center; }
.current { width: 41px; margin: 0 3.500px; background: #38343a; border: 1px solid #454046; border-radius: 6px; }
.current::before { left: 29px; }
.current .mini { left: 21px; background: #7b1fa2; }
.current::after { left: 12px; width: 16px; background: #f27a66; }
.tray { margin-left: auto; display: flex; align-items: center; }
.tray svg { fill: none; stroke: #fff; stroke-width: 1.800; stroke-linecap: round; }
.tray svg + svg { margin-left: 25px; }
.tray svg:nth-child(3) { margin-left: 23px; }
.tray svg:nth-child(4) { margin-left: 24px; }
.tray svg:nth-child(n+5) { margin-left: 10px; }
.clock { width: 104px; margin: 0 30px 0 12px; display: flex; flex-direction: column; text-align: right; font-size: 17.400px; letter-spacing: .1px; line-height: 24px; }
```
